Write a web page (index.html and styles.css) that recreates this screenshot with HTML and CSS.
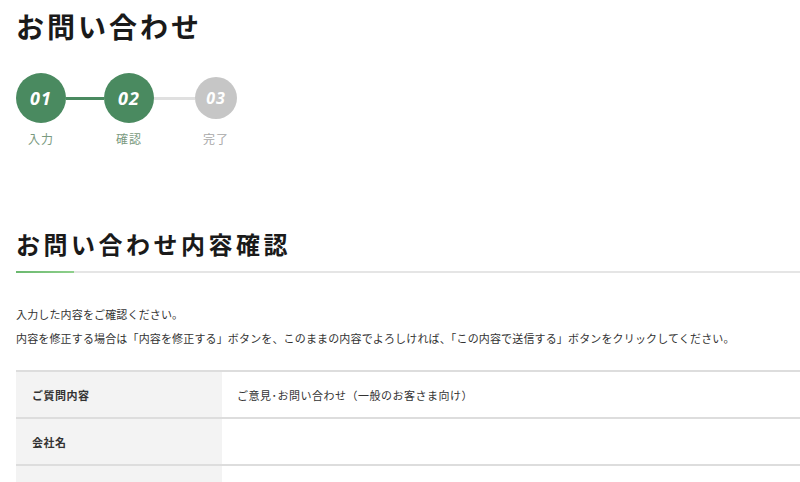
FILE: index.html
```html
<!DOCTYPE html>
<html lang="ja">

<head>
    <meta charset="UTF-8">
    <meta name="viewport" content="width=device-width, initial-scale=1.0">
    <title>お問い合わせ</title>
    <link rel="stylesheet" href="styles.css">
</head>

<body>
    <div class="container">
        <h1 class="page-title">お問い合わせ</h1>

        <!-- step indicator -->
        <ol class="steps">
            <li class="step done">
                <div class="circle-box"><span class="circle">01</span></div>
                <span class="step-label">入力</span>
            </li>
            <li class="bar done"></li>
            <li class="step done">
                <div class="circle-box"><span class="circle">02</span></div>
                <span class="step-label">確認</span>
            </li>
            <li class="bar"></li>
            <li class="step todo">
                <div class="circle-box"><span class="circle">03</span></div>
                <span class="step-label">完了</span>
            </li>
        </ol>

        <section class="confirm">
            <h2 class="section-title">お問い合わせ内容確認</h2>
            <p class="lead">入力した内容をご確認ください。<br>内容を修正する場合は「内容を修正する」ボタンを、このままの内容でよろしければ、「この内容で送信する」ボタンをクリックしてください。</p>

            <table class="confirm-table">
                <tr>
                    <th>ご質問内容</th>
                    <td>ご意見･お問い合わせ（一般のお客さま向け）</td>
                </tr>
                <tr>
                    <th>会社名</th>
                    <td></td>
                </tr>
                <tr>
                    <th>&nbsp;</th>
                    <td></td>
                </tr>
            </table>
        </section>
    </div>
</body>

</html>
```

FILE: styles.css
```css
* {
    margin: 0;
    padding: 0;
    box-sizing: border-box;
}

body {
    font-family: "Noto Sans CJK JP", "Noto Sans", sans-serif;
    color: #222;
    background: #fff;
    overflow: hidden;
}

.container {
    padding-left: 16px;
}

.page-title {
    margin-top: 6px;
    font-size: 28px;
    line-height: 40px;
    font-weight: 700;
    letter-spacing: 3px;
    color: #1a1a1a;
}

/* steps */
.steps {
    list-style: none;
    display: flex;
    align-items: flex-start;
    margin-top: 27px;
}

.step {
    display: flex;
    flex-direction: column;
    align-items: center;
}

.circle-box {
    height: 50px;
    display: flex;
    align-items: center;
}

.circle {
    display: flex;
    align-items: center;
    justify-content: center;
    width: 50px;
    height: 50px;
    border-radius: 50%;
    background: #4a8a60;
    color: #fff;
    font-family: "Open Sans", sans-serif;
    font-style: italic;
    font-weight: 700;
    font-size: 18px;
    letter-spacing: 1px;
}

.step.todo .circle {
    width: 42px;
    height: 42px;
    background: #c6c6c6;
    font-size: 16px;
}

.step-label {
    margin-top: 8px;
    font-size: 12px;
    line-height: 16px;
    color: #7a9a80;
    letter-spacing: 1px;
}

.step.todo .step-label {
    color: #a8a8a8;
}

.bar {
    width: 41px;
    height: 3px;
    margin-top: 24px;
    background: #e0e0e0;
}

.bar.done {
    width: 38px;
    background: #4a8a60;
}

/* confirm section */
.confirm {
    margin-top: 80px;
}

.section-title {
    position: relative;
    font-size: 24px;
    line-height: 34px;
    font-weight: 700;
    letter-spacing: 3.5px;
    color: #1a1a1a;
    padding-bottom: 10px;
    border-bottom: 2px solid #e5e5e5;
}

.section-title::after {
    content: "";
    position: absolute;
    left: 0;
    bottom: -2px;
    width: 58px;
    height: 2px;
    background: linear-gradient(to right, #6ab86e, #8fd08c);
}

.lead {
    margin-top: 29px;
    font-size: 11px;
    line-height: 24px;
    letter-spacing: 0.15px;
    color: #333;
}

.confirm-table {
    width: 100%;
    margin-top: 20px;
    border-collapse: collapse;
    font-size: 11px;
    color: #333;
}

.confirm-table tr {
    border-top: 2px solid #ddd;
}

.confirm-table th,
.confirm-table td {
    height: 47px;
    text-align: left;
    vertical-align: middle;
    letter-spacing: 0.5px;
}

.confirm-table th {
    width: 206px;
    padding-left: 16px;
    background: #f3f3f3;
    font-weight: 700;
}

.confirm-table td {
    padding-left: 15px;
}
```
